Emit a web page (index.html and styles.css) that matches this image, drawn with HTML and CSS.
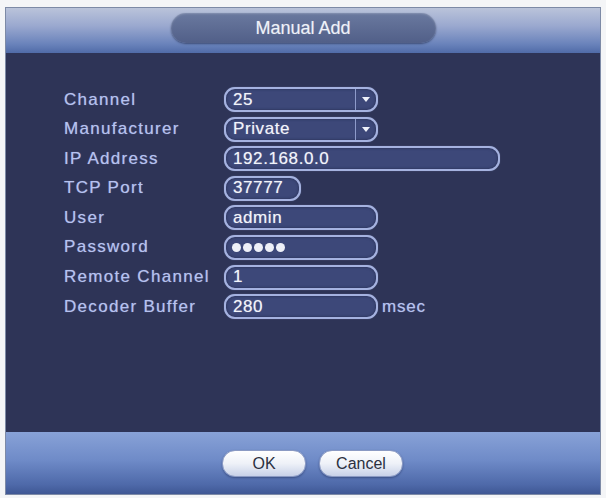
FILE: index.html
```html
<!DOCTYPE html>
<html lang="en">
<head>
    <meta charset="UTF-8">
    <meta name="viewport" content="width=device-width, initial-scale=1.0">
    <title>Manual Add</title>
    <link rel="stylesheet" href="styles.css">
</head>
<body>
    <div class="dialog">
        <div class="dialog-header">
            <div class="title">Manual Add</div>
        </div>
        <form class="dialog-body">
            <div class="row">
                <label>Channel</label>
                <div class="field select">
                    <span class="value">25</span>
                    <span class="drop"><span class="arrow"></span></span>
                </div>
            </div>
            <div class="row">
                <label>Manufacturer</label>
                <div class="field select">
                    <span class="value">Private</span>
                    <span class="drop"><span class="arrow"></span></span>
                </div>
            </div>
            <div class="row">
                <label>IP Address</label>
                <div class="field wide"><span class="value">192.168.0.0</span></div>
            </div>
            <div class="row">
                <label>TCP Port</label>
                <div class="field short"><span class="value">37777</span></div>
            </div>
            <div class="row">
                <label>User</label>
                <div class="field"><span class="value">admin</span></div>
            </div>
            <div class="row">
                <label>Password</label>
                <div class="field">
                    <span class="value dots"><i></i><i></i><i></i><i></i><i></i></span>
                </div>
            </div>
            <div class="row">
                <label>Remote Channel</label>
                <div class="field"><span class="value">1</span></div>
            </div>
            <div class="row">
                <label>Decoder Buffer</label>
                <div class="field"><span class="value">280</span></div>
                <span class="unit">msec</span>
            </div>
        </form>
        <div class="dialog-footer">
            <button type="button">OK</button>
            <button type="button">Cancel</button>
        </div>
    </div>
</body>
</html>
```

FILE: styles.css
```css
body {
    margin: 0;
    padding: 7px 5px 3px 5px;
    background-color: #f4f5f7;
    font-family: "Liberation Sans", Arial, sans-serif;
}

.dialog {
    width: 596px;
    height: 488px;
    box-sizing: border-box;
    border: 1px solid #7d8aa6;
    display: flex;
    flex-direction: column;
}

.dialog-header {
    height: 45px;
    background: linear-gradient(to bottom, #bac3da 0%, #9aa8cf 40%, #6a83bb 80%, #506ba8 100%);
    display: flex;
    justify-content: center;
    padding-top: 5px;
    box-sizing: border-box;
}

.title {
    width: 265px;
    height: 30px;
    border-radius: 15px;
    background: linear-gradient(to bottom, #6a799f, #515f88);
    box-shadow: inset 0 1px 2px rgba(255, 255, 255, 0.2), 0 1px 2px rgba(30, 40, 70, 0.6);
    color: #eef1f8;
    font-size: 18px;
    line-height: 30px;
    text-align: center;
    text-shadow: 0 0 1px rgba(255, 255, 255, 0.4);
}

.dialog-body {
    flex: 1;
    margin: 0;
    background-color: #2e3457;
    padding: 34px 0 0 58px;
    display: flex;
    flex-direction: column;
    gap: 4.6px;
}

.row {
    display: flex;
    align-items: center;
    height: 25px;
}

.row label {
    width: 160px;
    flex-shrink: 0;
    color: #b6c2f0;
    font-size: 17px;
    letter-spacing: 1.3px;
    text-shadow: 0 0 1px rgba(182, 194, 240, 0.6);
}

.field {
    width: 154px;
    height: 25px;
    box-sizing: border-box;
    border: 2px solid #a5b2e0;
    border-radius: 11px;
    background-color: #3d4879;
    box-shadow: inset 0 0 3px rgba(20, 25, 50, 0.6), 0 0 1px rgba(165, 178, 224, 0.6);
    display: flex;
    align-items: center;
    overflow: hidden;
}

.field.wide {
    width: 276px;
}

.field.short {
    width: 77px;
}

.value {
    flex: 1;
    padding-left: 7px;
    color: #f2f4fb;
    font-size: 17px;
    letter-spacing: 0.6px;
    text-shadow: 0 0 1px rgba(255, 255, 255, 0.5);
}

.value.dots {
    display: flex;
    gap: 2px;
    padding-left: 6px;
}

.value.dots i {
    width: 9px;
    height: 9px;
    border-radius: 50%;
    background-color: #eef0f8;
}

.drop {
    width: 20px;
    height: 100%;
    border-left: 1px solid #8e9bca;
    display: flex;
    align-items: center;
    justify-content: center;
}

.arrow {
    width: 0;
    height: 0;
    border-left: 4px solid transparent;
    border-right: 4px solid transparent;
    border-top: 5px solid #eef1fa;
}

.unit {
    margin-left: 4px;
    color: #b6c2f0;
    font-size: 17px;
    letter-spacing: 0.8px;
    text-shadow: 0 0 1px rgba(182, 194, 240, 0.6);
}

.dialog-footer {
    height: 62px;
    background: linear-gradient(to bottom, #88a2d7 0%, #6f8bc8 45%, #4e69a9 85%, #3f5794 100%);
    display: flex;
    justify-content: center;
    gap: 13px;
    padding: 18px 0 0 19px;
    box-sizing: border-box;
}

.dialog-footer button {
    width: 84px;
    height: 27px;
    border: 1px solid #8b9ac3;
    border-radius: 13px;
    background: linear-gradient(to bottom, #ffffff 0%, #eef1f8 50%, #c8d1e8 100%);
    box-shadow: 0 1px 2px rgba(20, 30, 70, 0.4);
    color: #2b3040;
    font-family: "Liberation Sans", Arial, sans-serif;
    font-size: 16px;
    padding: 0;
}
```
